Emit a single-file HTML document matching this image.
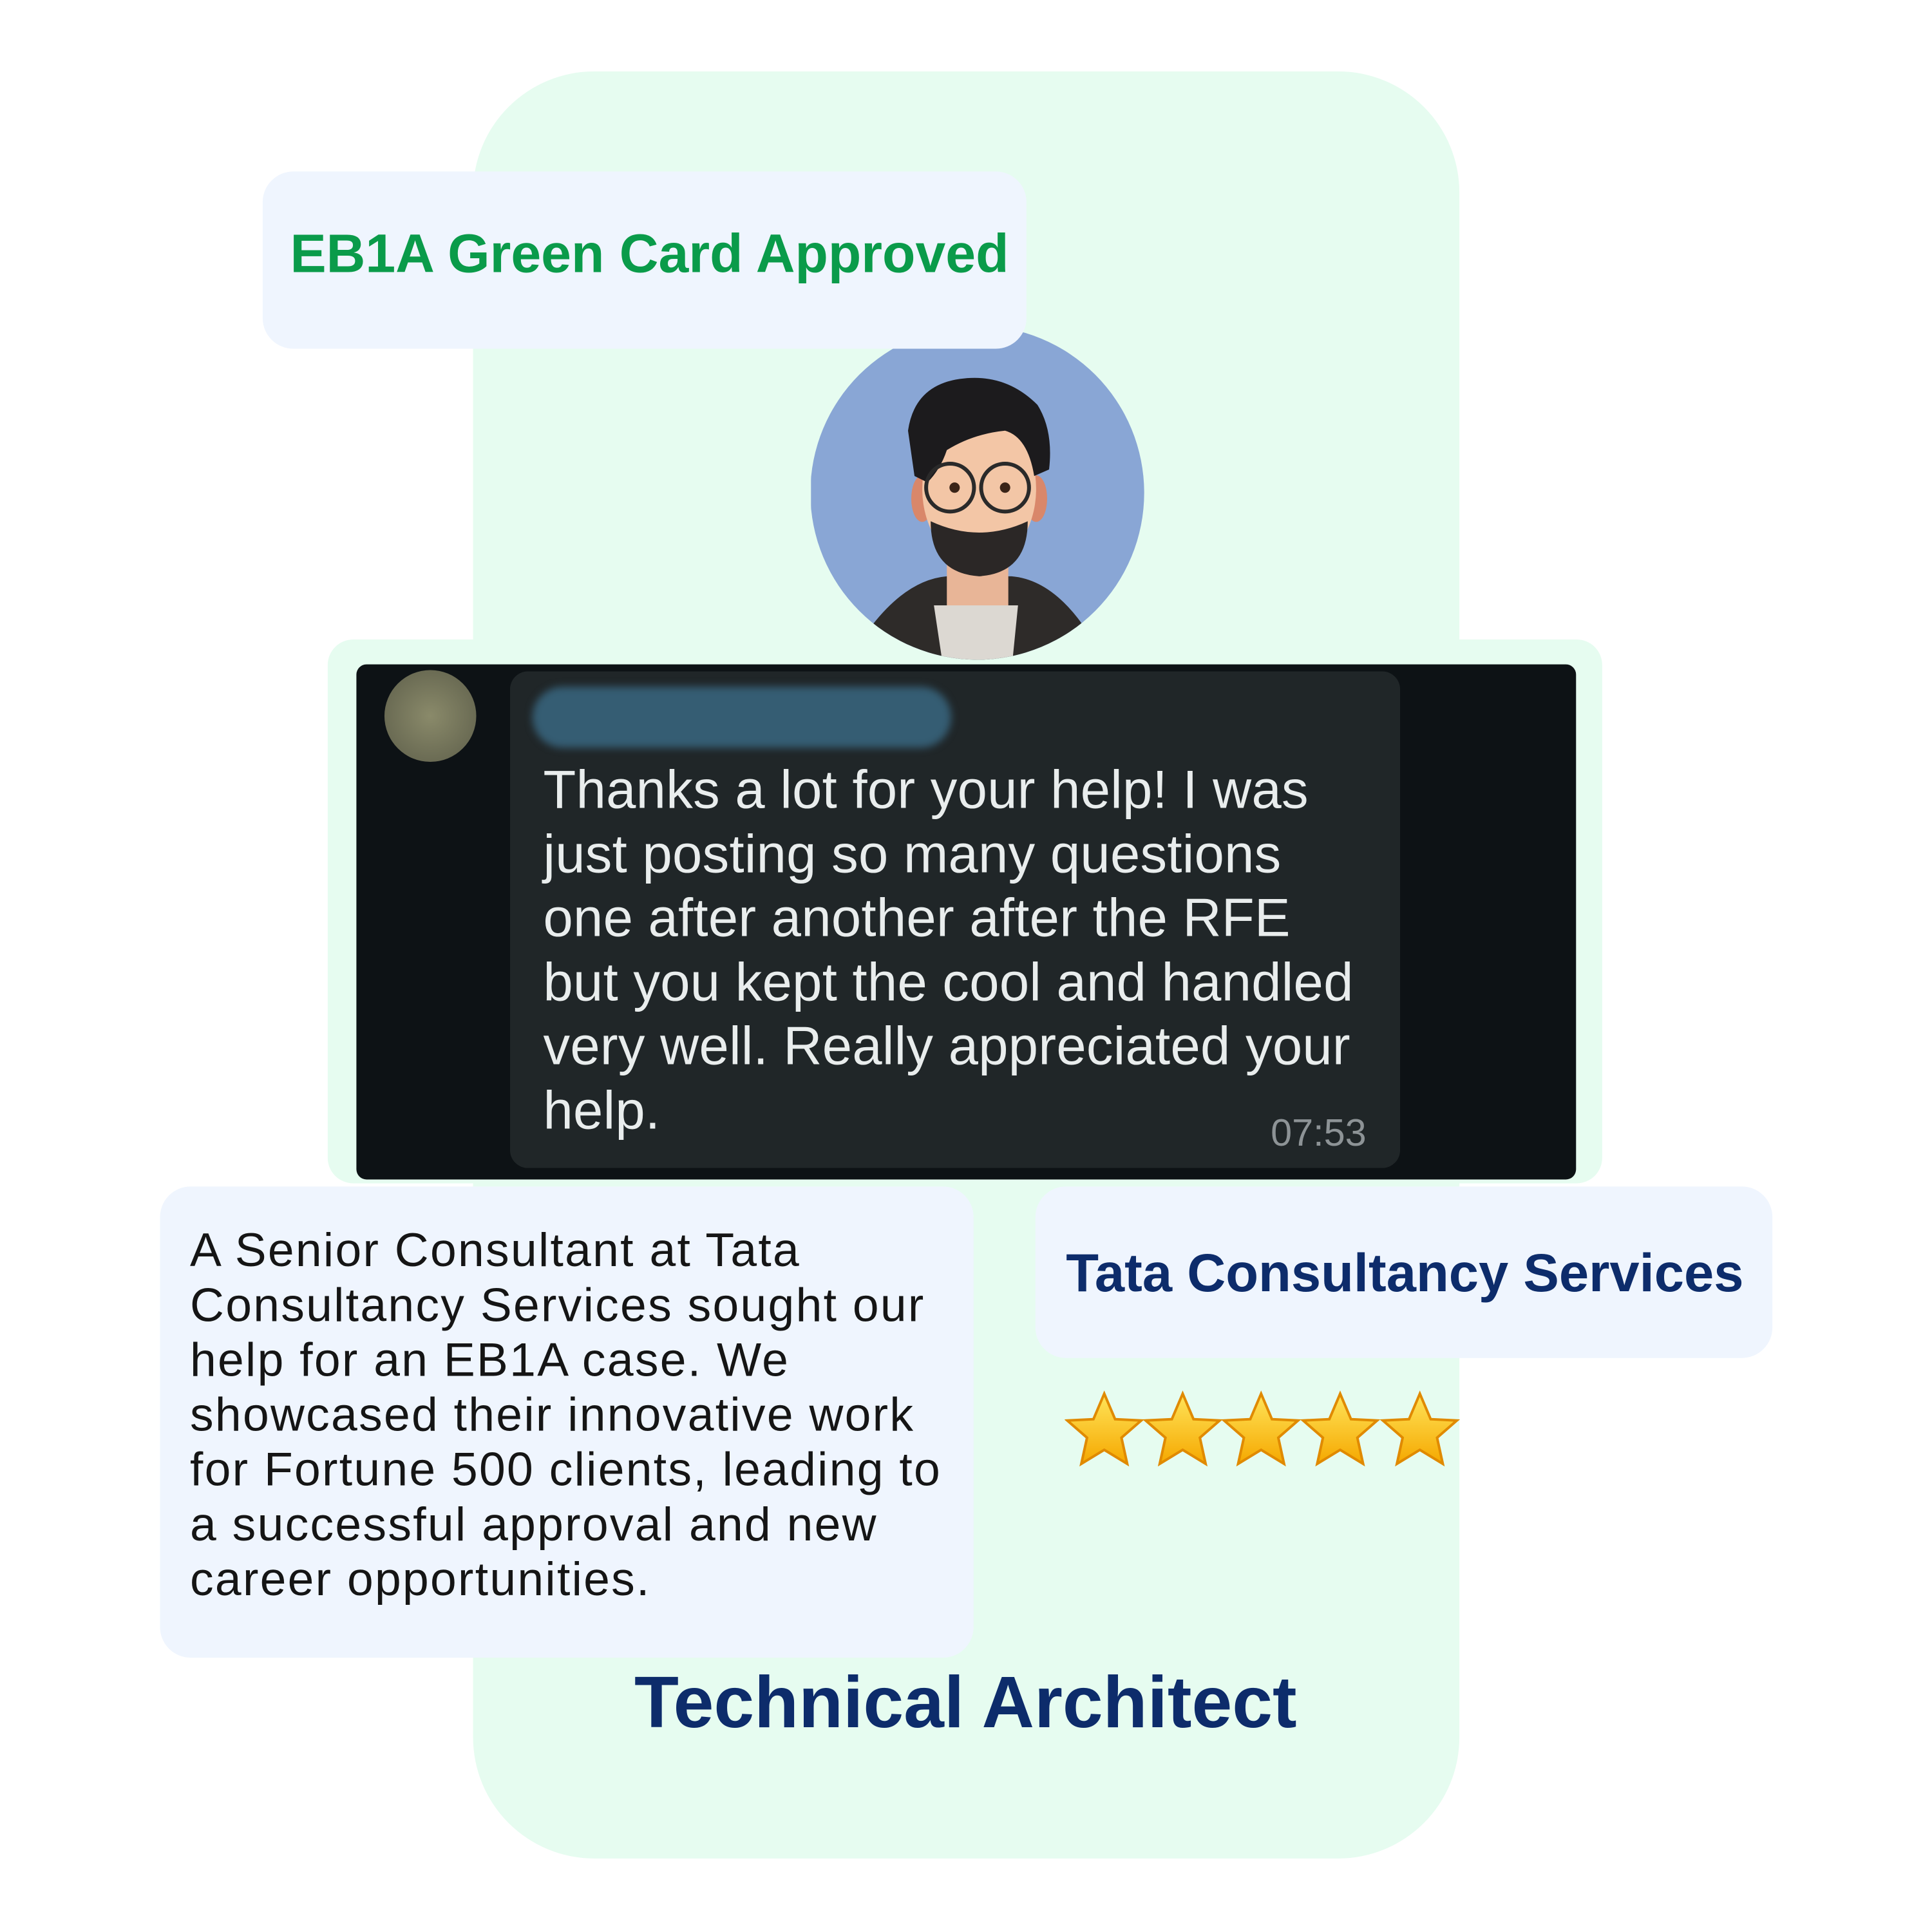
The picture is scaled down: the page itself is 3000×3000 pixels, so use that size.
<!DOCTYPE html>
<html><head><meta charset="utf-8"><style>
html,body{margin:0;padding:0;background:#fff;}
body{width:3000px;height:3000px;position:relative;overflow:hidden;font-family:"Liberation Sans",sans-serif;}
.a{position:absolute;}
#w{position:absolute;left:0;top:0;width:3000px;height:3000px;transform:scale(0.99);transform-origin:0 0;}
</style></head><body><div id="w">
<div class="a" style="left:742px;top:112px;width:1547px;height:2803px;background:#e6fcf0;border-radius:190px;"></div>
<div class="a" style="left:514px;top:1003px;width:1999px;height:853px;background:#e6fcf0;border-radius:40px;"></div>

<svg class="a" style="left:1272px;top:503px" width="548" height="548" viewBox="0 0 540 540">
<defs><clipPath id="c"><circle cx="257" cy="266" r="258"/></clipPath></defs>
<circle cx="257" cy="266" r="258" fill="#89a6d5"/>
<g clip-path="url(#c)">
<path d="M95 470 Q150 400 210 395 L310 395 Q370 400 420 470 L440 540 L80 540Z" fill="#2e2b29"/>
<path d="M190 440 L320 440 L310 540 L205 540Z" fill="#dcd8d2"/>
<rect x="210" y="330" width="95" height="110" fill="#e8b597"/>
<ellipse cx="172" cy="275" rx="17" ry="36" fill="#d9876a"/>
<ellipse cx="348" cy="275" rx="17" ry="36" fill="#d9876a"/>
<ellipse cx="260" cy="260" rx="88" ry="118" fill="#f3c6a6"/>
<path d="M185 310 Q260 345 335 310 Q335 390 260 395 Q185 390 185 310Z" fill="#2b2726"/>
<path d="M150 170 Q160 100 230 90 Q300 80 350 130 Q375 170 368 230 L345 240 Q335 180 300 170 Q250 175 210 200 Q200 230 180 250 L160 240Z" fill="#1c1b1d"/>
<circle cx="215" cy="258" r="37" fill="none" stroke="#2a2a2a" stroke-width="6"/>
<circle cx="300" cy="258" r="37" fill="none" stroke="#2a2a2a" stroke-width="6"/>
<circle cx="222" cy="258" r="8" fill="#3a2418"/><circle cx="300" cy="258" r="8" fill="#3a2418"/>
</g>
</svg>

<div class="a" style="left:412px;top:269px;width:1198px;height:278px;background:#eff5fe;border-radius:48px;"></div>
<div class="a" style="left:455px;top:350px;font-size:85px;font-weight:bold;color:#0a9b4a;white-space:nowrap;">EB1A Green Card Approved</div>

<div class="a" style="left:559px;top:1042px;width:1913px;height:808px;background:#0d1215;border-radius:16px;overflow:hidden;">
 <div class="a" style="left:241px;top:11px;width:1396px;height:779px;background:#202628;border-radius:28px;"></div>
 <div class="a" style="left:44px;top:9px;width:144px;height:144px;border-radius:50%;background:radial-gradient(circle,#8a8a6a,#5d5e4a);"></div>
 <div class="a" style="left:276px;top:35px;width:657px;height:96px;border-radius:48px;background:#355d73;filter:blur(6px);"></div>
 <div class="a" style="left:293px;top:146px;font-size:84px;line-height:100.5px;color:#e9eded;letter-spacing:0.3px;white-space:nowrap;">Thanks a lot for your help! I was<br>just posting so many questions<br>one after another after the RFE<br>but you kept the cool and handled<br>very well. Really appreciated your<br>help.</div>
 <div class="a" style="left:1434px;top:700px;font-size:60px;color:#8d9396;">07:53</div>
</div>

<div class="a" style="left:251px;top:1861px;width:1276px;height:739px;background:#eff5fe;border-radius:48px;"></div>
<div class="a" style="left:298px;top:1918px;font-size:74px;letter-spacing:2.3px;line-height:86px;color:#151515;white-space:nowrap;">A Senior Consultant at Tata<br>Consultancy Services sought our<br>help for an EB1A case. We<br>showcased their innovative work<br>for Fortune 500 clients, leading to<br>a successful approval and new<br>career opportunities.</div>

<div class="a" style="left:1624px;top:1861px;width:1156px;height:269px;background:#eff5fe;border-radius:48px;"></div>
<div class="a" style="left:1672px;top:1948px;font-size:84px;font-weight:bold;color:#0d2c6b;white-space:nowrap;">Tata Consultancy Services</div>

<svg class="a" style="left:1670px;top:2180px" width="620" height="130" viewBox="0 0 620 130">
<defs><linearGradient id="g" x1="0" y1="0" x2="0" y2="1"><stop offset="0" stop-color="#ffe45a"/><stop offset="1" stop-color="#f5a800"/></linearGradient>
<path id="s" d="M0-58 L17-18 L58-16 L27 11 L36 52 L0 30 L-36 52 L-27 11 L-58-16 L-17-18Z"/></defs>
<g fill="url(#g)" stroke="#e08a00" stroke-width="4">
<use href="#s" x="62" y="64"/><use href="#s" x="185" y="64"/><use href="#s" x="308" y="64"/><use href="#s" x="432" y="64"/><use href="#s" x="557" y="64"/>
</g></svg>

<div class="a" style="left:995px;top:2605px;font-size:114px;font-weight:bold;color:#0d2c6b;white-space:nowrap;">Technical Architect</div>
</div></body></html>
